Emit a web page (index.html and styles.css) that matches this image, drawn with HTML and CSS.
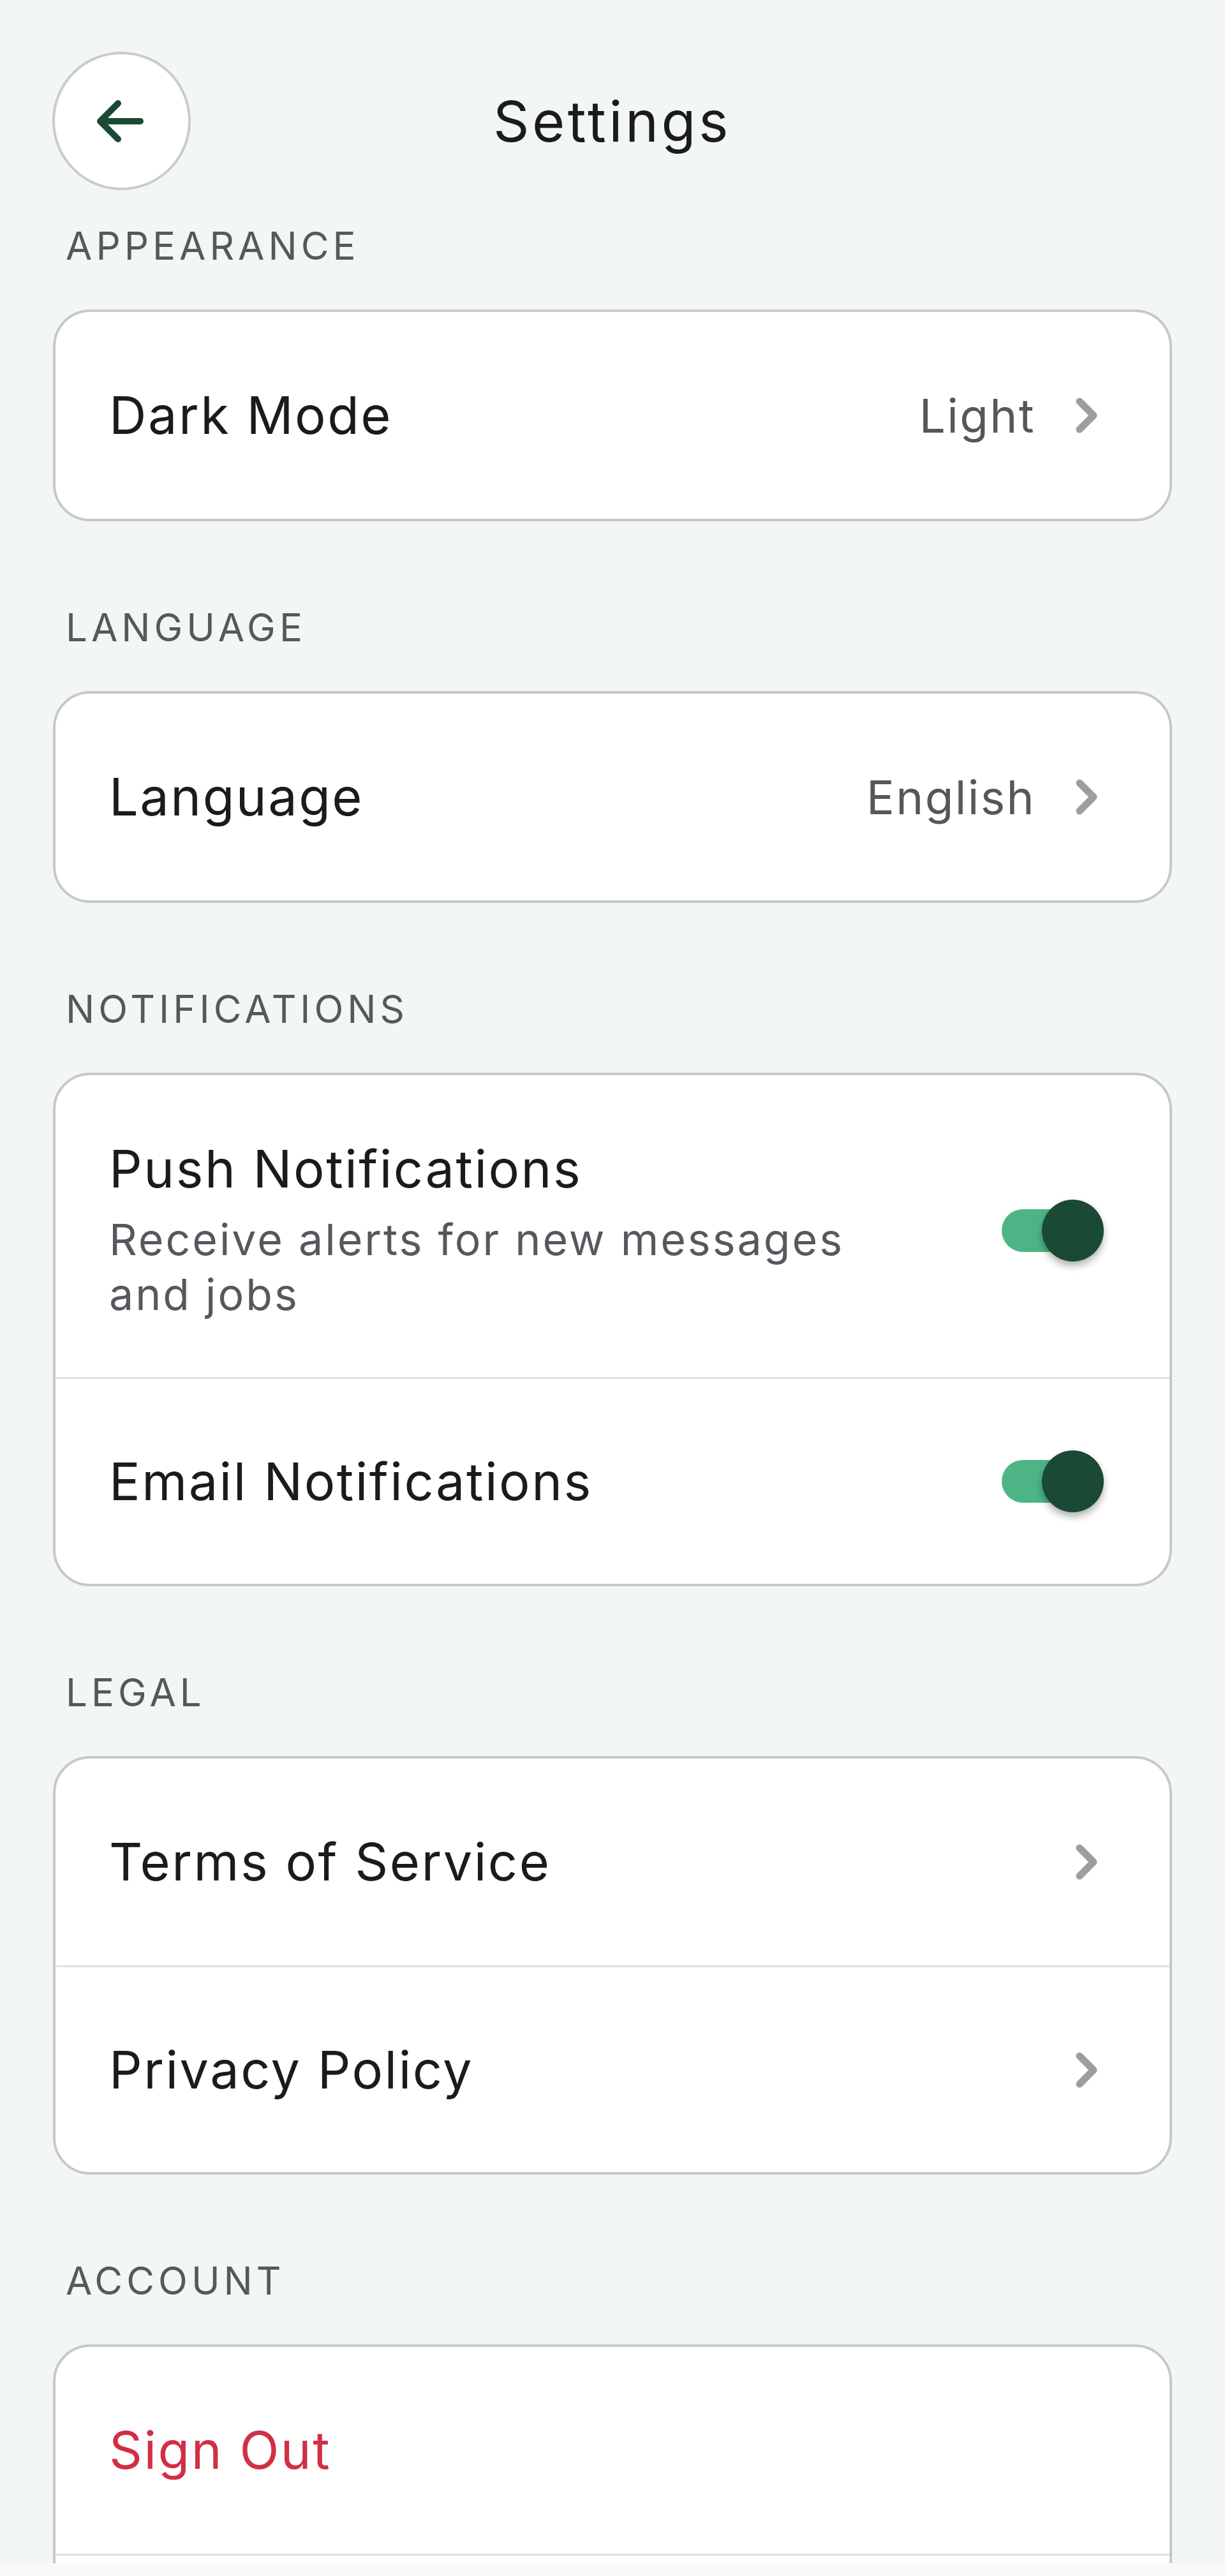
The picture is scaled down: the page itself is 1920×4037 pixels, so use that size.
FILE: index.html
```html
<!DOCTYPE html>
<html lang="en">
<head>
  <meta charset="UTF-8" />
  <title>Settings</title>
  <link rel="stylesheet" href="styles.css">
</head>
<body>
  <div class="screen">
    <header class="topbar">
      <button class="back-btn" aria-label="Back">
        <svg width="90" height="80" viewBox="0 0 90 80"><path d="M74 40H12M39 12L11 40l28 28" fill="none" stroke="#1a4a33" stroke-width="10" stroke-linecap="round" stroke-linejoin="round"/></svg>
      </button>
      <h1>Settings</h1>
      <span class="spacer"></span>
    </header>

    <main class="content">
      <section class="group">
        <h2 class="group-label">Appearance</h2>
        <div class="card">
          <div class="row">
            <span class="row-title">Dark Mode</span>
            <span class="row-value">Light</span>
            <svg class="chevron" viewBox="0 0 36 60"><polyline points="6,8 28,30 6,52" /></svg>
          </div>
        </div>
      </section>

      <section class="group">
        <h2 class="group-label">Language</h2>
        <div class="card">
          <div class="row">
            <span class="row-title">Language</span>
            <span class="row-value">English</span>
            <svg class="chevron" viewBox="0 0 36 60"><polyline points="6,8 28,30 6,52" /></svg>
          </div>
        </div>
      </section>

      <section class="group">
        <h2 class="group-label">Notifications</h2>
        <div class="card">
          <div class="row push">
            <div class="row-text">
              <div class="row-title">Push Notifications</div>
              <div class="row-sub">Receive alerts for new messages and jobs</div>
            </div>
            <span class="switch"><span class="switch-track"></span><span class="switch-thumb"></span></span>
          </div>
          <div class="row">
            <span class="row-title">Email Notifications</span>
            <span class="switch"><span class="switch-track"></span><span class="switch-thumb"></span></span>
          </div>
        </div>
      </section>

      <section class="group">
        <h2 class="group-label">Legal</h2>
        <div class="card">
          <div class="row">
            <span class="row-title">Terms of Service</span>
            <svg class="chevron" viewBox="0 0 36 60"><polyline points="6,8 28,30 6,52" /></svg>
          </div>
          <div class="row">
            <span class="row-title">Privacy Policy</span>
            <svg class="chevron" viewBox="0 0 36 60"><polyline points="6,8 28,30 6,52" /></svg>
          </div>
        </div>
      </section>

      <section class="group">
        <h2 class="group-label">Account</h2>
        <div class="card">
          <div class="row">
            <span class="row-title danger">Sign Out</span>
          </div>
          <div class="row"></div>
        </div>
      </section>
    </main>

    <div class="bottom-strip"></div>
  </div>
</body>
</html>
```

FILE: styles.css
```css
* {
  box-sizing: border-box;
}

html, body {
  margin: 0;
}

body {
  font-family: Inter, "DejaVu Sans", sans-serif;
  background: #f3f7f4;
  color: #1b1b1b;
}

.screen {
  height: 4037px;
  display: flex;
  flex-direction: column;
  overflow: hidden;
}

.topbar {
  display: flex;
  align-items: center;
  padding: 81px 83px 0 82px;
  flex-shrink: 0;
}

.back-btn {
  width: 217px;
  height: 217px;
  flex-shrink: 0;
  padding: 0;
  border-radius: 50%;
  border: 4px solid #c9cccb;
  background: #fff;
  display: flex;
  align-items: center;
  justify-content: center;
}

.topbar h1 {
  flex: 1;
  margin: 0;
  text-align: center;
  font-size: 88px;
  line-height: 1;
  font-weight: 400;
  letter-spacing: 4.5px;
  color: #1b1b1b;
}

.topbar .spacer {
  width: 217px;
  flex-shrink: 0;
}

.content {
  flex: 1;
  overflow: hidden;
  padding: 0 83px;
}

.group {
  margin-top: 136px;
}

.group:first-child {
  margin-top: 57px;
}

.group-label {
  margin: 0 0 70px 20px;
  font-size: 60px;
  line-height: 60px;
  font-weight: 400;
  letter-spacing: 6px;
  text-transform: uppercase;
  color: #55595c;
}

.card {
  background: #fff;
  border: 4px solid #c6c9c8;
  border-radius: 58px;
  overflow: hidden;
}

.row {
  display: flex;
  align-items: center;
  min-height: 324px;
  padding: 0 103px 0 84px;
}

.row + .row {
  border-top: 3px solid #dfe2e2;
}

.row-title {
  flex: 1;
  font-size: 81px;
  line-height: 92px;
  letter-spacing: 2.5px;
  color: #1b1b1b;
}

.row-value {
  font-size: 73px;
  letter-spacing: 2.3px;
  color: #54585c;
  margin-right: 63px;
}

.chevron {
  width: 36px;
  height: 60px;
  margin-right: 8px;
  flex-shrink: 0;
  fill: none;
  stroke: #9c9fa1;
  stroke-width: 11;
  stroke-linecap: round;
  stroke-linejoin: round;
}

.row.push {
  padding-top: 101px;
  padding-bottom: 87px;
}

.row-text {
  flex: 1;
  padding-right: 170px;
}

.row-sub {
  margin-top: 21px;
  font-size: 68px;
  line-height: 86px;
  letter-spacing: 3px;
  color: #55595d;
}

.danger {
  color: #d22f44;
}

.switch {
  position: relative;
  width: 160px;
  height: 97px;
  flex-shrink: 0;
}

.switch-track {
  position: absolute;
  left: 0;
  top: 15px;
  width: 140px;
  height: 67px;
  border-radius: 34px;
  background: #4db585;
}

.switch-thumb {
  position: absolute;
  right: 0;
  top: 0;
  width: 97px;
  height: 97px;
  border-radius: 50%;
  background: #1b4a34;
  box-shadow: 0 7px 12px rgba(0, 0, 0, 0.3);
}

.bottom-strip {
  height: 20px;
  flex-shrink: 0;
  background: #f8f9f8;
}
```
